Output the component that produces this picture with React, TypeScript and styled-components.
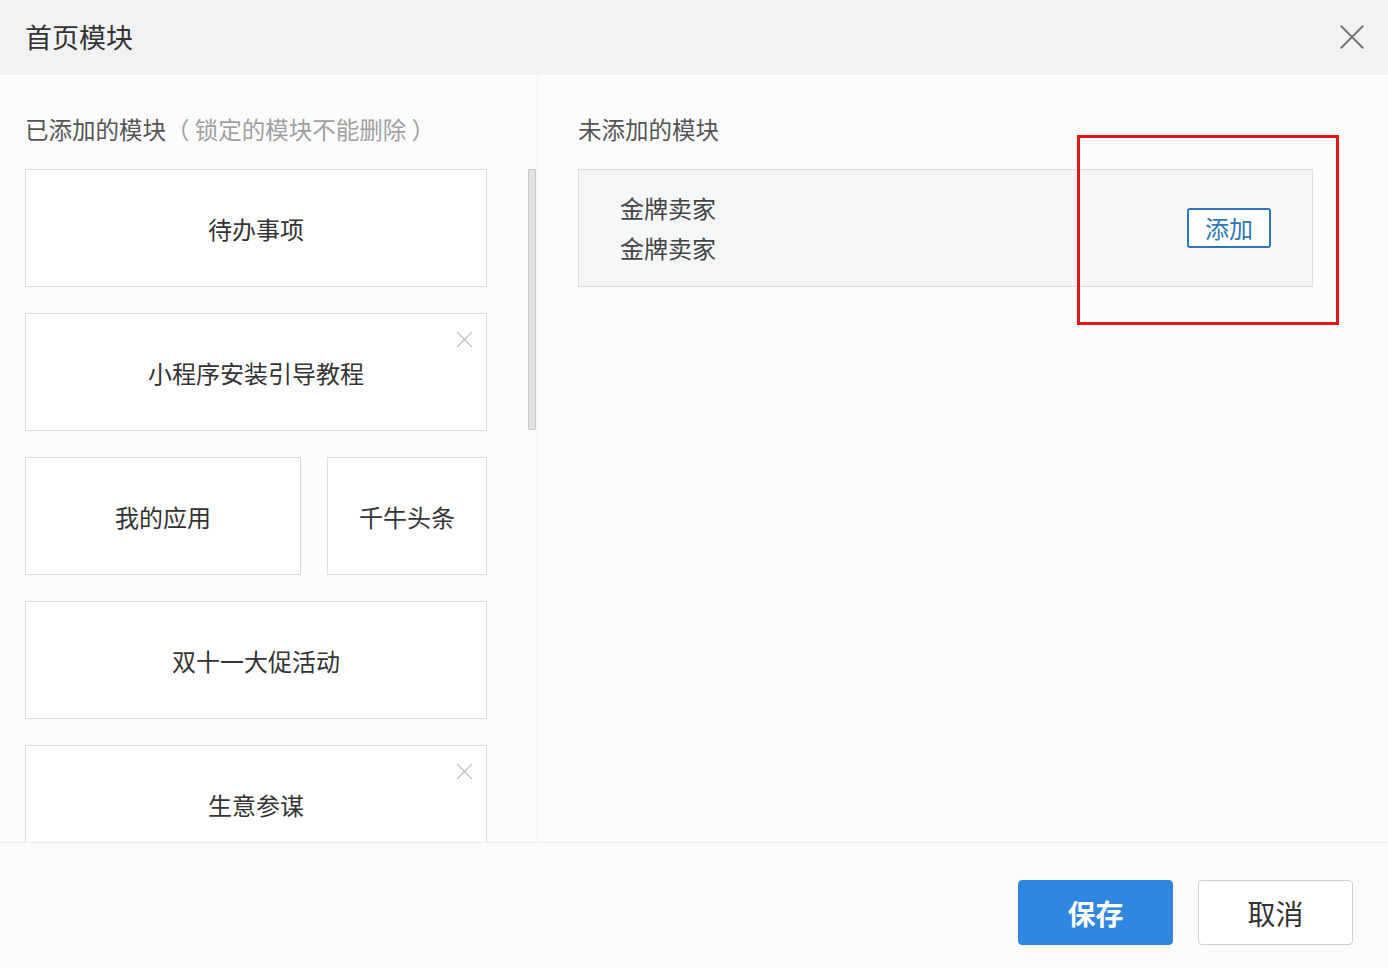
import React from "react";
import styled, { createGlobalStyle } from "styled-components";

const GlobalStyle = createGlobalStyle`
  html, body {
    margin: 0;
    padding: 0;
    background: #fcfcfd;
  }
  body {
    font-family: "Noto Sans CJK SC", "Noto Sans", "Liberation Sans", sans-serif;
    color: #333;
  }
  * {
    box-sizing: border-box;
  }
`;

const Dialog = styled.div`
  width: 1388px;
  height: 968px;
  display: flex;
  flex-direction: column;
  overflow: hidden;
  background: #fcfcfd;
`;

const Header = styled.div`
  height: 75px;
  flex: none;
  display: flex;
  align-items: center;
  justify-content: space-between;
  padding: 0 22px 2px 25px;
  background: #f2f2f4;
`;

const Title = styled.h1`
  margin: 0;
  font-size: 27px;
  font-weight: 400;
  color: #333;
`;

const CloseButton = styled.button`
  width: 28px;
  height: 28px;
  padding: 0;
  border: none;
  background: none;
  display: flex;
  align-items: center;
  justify-content: center;
  cursor: pointer;
`;

const Body = styled.div`
  flex: 1;
  min-height: 0;
  display: flex;
`;

const LeftPanel = styled.div`
  width: 538px;
  flex: none;
  position: relative;
  border-right: 1px solid #efeff1;
  padding: 38px 0 0 25px;
  display: flex;
  flex-direction: column;
  overflow: hidden;
`;

const RightPanel = styled.div`
  flex: 1;
  position: relative;
  padding: 38px 75px 0 40px;
  display: flex;
  flex-direction: column;
`;

const SectionTitle = styled.div`
  font-size: 23.5px;
  line-height: 32px;
  color: #555;
  margin-bottom: 24px;
  white-space: nowrap;
`;

const Hint = styled.span`
  color: #a0a0a0;
`;

const CardList = styled.div`
  width: 462px;
  display: flex;
  flex-direction: column;
  gap: 26px;
`;

const CardRow = styled.div`
  display: flex;
  gap: 26px;
`;

const ModuleCard = styled.div<{ $width?: number }>`
  position: relative;
  flex: none;
  width: ${(p) => (p.$width ? `${p.$width}px` : "100%")};
  height: 118px;
  background: #fff;
  border: 1px solid #dcdcdf;
  display: flex;
  align-items: center;
  justify-content: center;
  font-size: 24px;
  color: #333;
`;

const RemoveIcon = styled.button`
  position: absolute;
  top: 16px;
  right: 13px;
  width: 18px;
  height: 18px;
  padding: 0;
  border: none;
  background: none;
  display: flex;
  align-items: center;
  justify-content: center;
`;

const ScrollThumb = styled.div`
  position: absolute;
  top: 94px;
  left: 528px;
  width: 8px;
  height: 261px;
  background: #e2e2e4;
  border: 1px solid #c9c9cc;
  border-radius: 1px;
`;

const CandidateCard = styled.div`
  height: 118px;
  background: #f5f6f8;
  border: 1px solid #dcdde0;
  display: flex;
  align-items: center;
  justify-content: space-between;
  padding: 0 41px 0 41px;
`;

const CandidateText = styled.div`
  font-size: 24px;
  line-height: 40px;
  color: #444;
`;

const AddButton = styled.button`
  width: 84px;
  height: 40px;
  border: 2px solid #2f77b8;
  border-radius: 3px;
  background: #fff;
  color: #2f77b8;
  font-family: inherit;
  font-size: 24px;
  line-height: 1;
  padding: 0;
  cursor: pointer;
`;

const Highlight = styled.div`
  position: absolute;
  left: 539px;
  top: 60px;
  width: 262px;
  height: 190px;
  border: 3px solid #e2161a;
  pointer-events: none;
`;

const Footer = styled.div`
  height: 126px;
  flex: none;
  border-top: 1px solid #ececee;
  background: #fbfbfc;
  display: flex;
  align-items: center;
  justify-content: flex-end;
  gap: 25px;
  padding: 14px 35px 0 0;
`;

const FooterButton = styled.button<{ $primary?: boolean }>`
  width: 155px;
  height: 65px;
  border-radius: 4px;
  font-family: inherit;
  font-size: 28px;
  cursor: pointer;
  border: 1px solid ${(p) => (p.$primary ? "#2e86de" : "#cfcfd2")};
  background: ${(p) => (p.$primary ? "#2e86de" : "#fff")};
  color: ${(p) => (p.$primary ? "#fff" : "#333")};
  font-weight: ${(p) => (p.$primary ? 700 : 400)};
`;

const Cross = ({ size, color, width }: { size: number; color: string; width: number }) => (
  <svg width={size} height={size} viewBox="0 0 24 24" fill="none">
    <path d="M2 2L22 22M22 2L2 22" stroke={color} strokeWidth={width} strokeLinecap="round" />
  </svg>
);

export default function App() {
  return (
    <>
      <GlobalStyle />
      <Dialog>
        <Header>
          <Title>首页模块</Title>
          <CloseButton>
            <Cross size={26} color="#666" width={1.6} />
          </CloseButton>
        </Header>

        <Body>
          <LeftPanel>
            <SectionTitle>
              已添加的模块<Hint>（ 锁定的模块不能删除 ）</Hint>
            </SectionTitle>
            <CardList>
              <ModuleCard>待办事项</ModuleCard>
              <ModuleCard>
                小程序安装引导教程
                <RemoveIcon>
                  <Cross size={17} color="#b8b8bb" width={1.6} />
                </RemoveIcon>
              </ModuleCard>
              <CardRow>
                <ModuleCard $width={276}>我的应用</ModuleCard>
                <ModuleCard $width={160}>千牛头条</ModuleCard>
              </CardRow>
              <ModuleCard>双十一大促活动</ModuleCard>
              <ModuleCard>
                生意参谋
                <RemoveIcon>
                  <Cross size={17} color="#b8b8bb" width={1.6} />
                </RemoveIcon>
              </ModuleCard>
            </CardList>
            <ScrollThumb />
          </LeftPanel>

          <RightPanel>
            <SectionTitle>未添加的模块</SectionTitle>
            <CandidateCard>
              <div>
                <CandidateText>金牌卖家</CandidateText>
                <CandidateText>金牌卖家</CandidateText>
              </div>
              <AddButton>添加</AddButton>
            </CandidateCard>
            <Highlight />
          </RightPanel>
        </Body>

        <Footer>
          <FooterButton $primary>保存</FooterButton>
          <FooterButton>取消</FooterButton>
        </Footer>
      </Dialog>
    </>
  );
}
